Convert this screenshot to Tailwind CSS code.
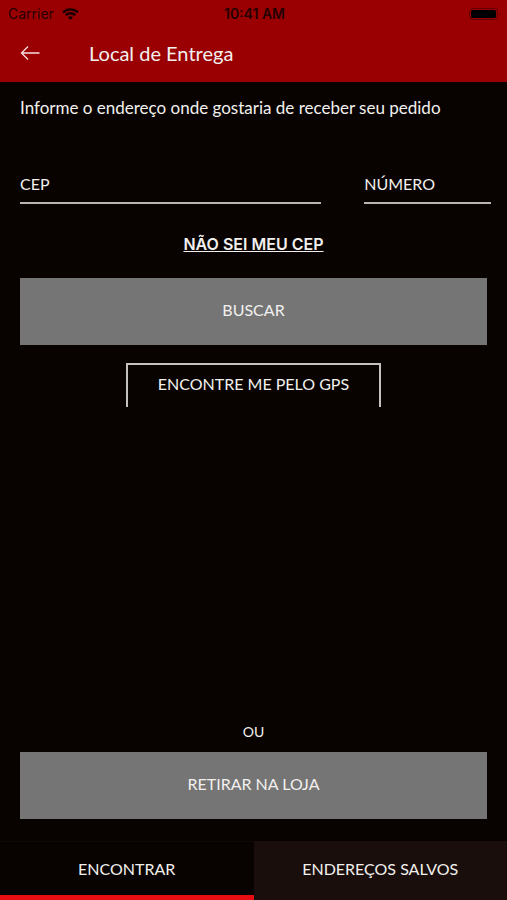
<!DOCTYPE html>
<html lang="pt-BR">
<head>
<meta charset="utf-8">
<meta name="viewport" content="width=device-width, initial-scale=1">
<title>Local de Entrega</title>
<script src="https://cdn.jsdelivr.net/npm/@tailwindcss/browser@4"></script>
</head>
<body class="flex min-h-screen flex-col bg-[#080300] font-['Lato','Noto_Sans',sans-serif] text-base leading-6 text-[#f2f0ee]">
  <header class="bg-[#9a0002]">
    <div class="grid h-7 grid-cols-3 items-center pr-1.5 pl-2 font-['Inter',sans-serif] text-sm leading-4 text-[#240000]">
      <div class="flex items-center gap-2">
        <span>Carrier</span>
        <svg class="h-3 w-[17px]" viewBox="0 0 17 12" fill="none" stroke="#180000" stroke-width="2.4" aria-hidden="true">
          <path d="M1 4.400C5.200.3 11.800.3 16 4.400"/>
          <path d="M3.700 7.200c2.700-2.600 6.900-2.600 9.600 0"/>
          <path d="M8.500 11.900 5.900 9.300c1.500-1.400 3.700-1.400 5.200 0z" fill="#180000" stroke="none"/>
        </svg>
      </div>
      <span class="text-center font-semibold">10:41 AM</span>
      <svg class="h-3.5 w-8 justify-self-end" viewBox="0 0 32 14" aria-hidden="true">
        <rect x=".5" y="1.500" width="28" height="11" rx="3" fill="none" stroke="#650001"/>
        <rect x="2" y="3" width="25" height="8" rx="1.500" fill="#000"/>
        <path d="M30 5.500q1.500 1.500 0 3z" fill="#500001"/>
      </svg>
    </div>
    <div class="flex h-[54px] items-center pb-1 pl-5">
      <button type="button" aria-label="Voltar" class="w-[69px]">
        <svg class="h-5 w-5" viewBox="0 0 20 20" fill="none" stroke="#f6dede" stroke-width="1.300" aria-hidden="true">
          <path d="M19.500 10H1.500M8 3.500 1.500 10 8 16.500"/>
        </svg>
      </button>
      <h1 class="text-xl">Local de Entrega</h1>
    </div>
  </header>

  <main class="flex grow flex-col px-5 pt-3.5">
    <p class="text-[17px]">Informe o endereço onde gostaria de receber seu pedido</p>
    <form class="mt-11 flex flex-col">
      <div class="-mr-1 grid grid-cols-[302fr_127fr] gap-[43px]">
        <div class="grid">
          <label for="cep" class="pointer-events-none self-center [grid-area:1/1]">CEP</label>
          <input id="cep" type="text" inputmode="numeric" class="h-10 w-full border-b-2 border-[#b8b6b4] bg-transparent outline-none [grid-area:1/1]">
        </div>
        <div class="grid">
          <label for="numero" class="pointer-events-none self-center [grid-area:1/1]">NÚMERO</label>
          <input id="numero" type="text" inputmode="numeric" class="h-10 w-full border-b-2 border-[#b8b6b4] bg-transparent outline-none [grid-area:1/1]">
        </div>
      </div>
      <a href="#" class="mt-7 self-center font-['Inter',sans-serif] text-base font-semibold underline">NÃO SEI MEU CEP</a>
      <button type="submit" class="mt-[22px] h-[67px] bg-[#757575] pb-1">BUSCAR</button>
      <button type="button" class="mt-[18px] h-11 w-[255px] self-center border-2 border-b-0 border-[#c4c2c0] pb-1">ENCONTRE ME PELO GPS</button>
    </form>
    <div class="mt-auto flex flex-col pb-[22px]">
      <p class="text-center text-sm">OU</p>
      <button type="button" class="mt-2.5 h-[67px] bg-[#757575] pb-1">RETIRAR NA LOJA</button>
    </div>
  </main>

  <nav class="grid h-[59px] grid-cols-2">
    <button type="button" aria-current="page" class="border-t border-b-5 border-t-[#100a07] border-b-[#e80c13]">ENCONTRAR</button>
    <button type="button" class="bg-[#190e0b] pb-1">ENDEREÇOS SALVOS</button>
  </nav>
</body>
</html>
